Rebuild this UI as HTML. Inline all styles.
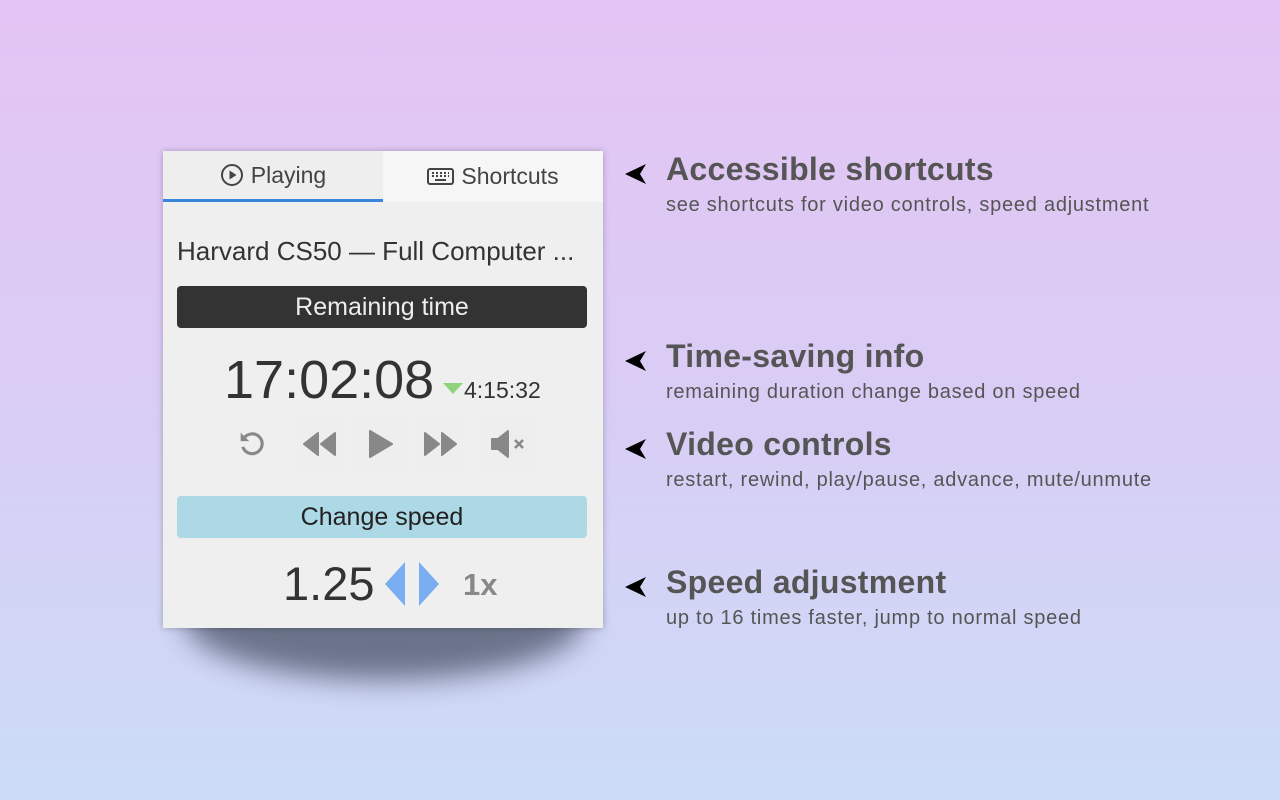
<!DOCTYPE html>
<html><head><meta charset="utf-8"><style>
*{margin:0;padding:0;box-sizing:border-box}
body{width:1280px;height:800px;overflow:hidden;background:linear-gradient(180deg,#e4c4f4 0%,#d9cdf5 50%,#cbdcf7 100%);font-family:"Liberation Sans",sans-serif;position:relative}
.shadow{position:absolute;left:185px;top:560px;width:400px;height:120px;border-radius:50%;background:#5a6278;filter:blur(14px);opacity:.85}
.panel{position:absolute;left:163px;top:151px;width:440px;height:477px;background:#efefef;box-shadow:0 0 6px rgba(0,0,0,.25);color:#333}
.tabs{height:51px;display:flex}
.tab{flex:1;display:flex;align-items:center;justify-content:center;font-size:23px;color:#444;gap:7px}
.t1{background:#eeeeee;border-bottom:3px solid #3b86dd}
.t2{background:#f6f6f6}
.title{position:absolute;left:14px;top:85px;font-size:26px;color:#333;white-space:nowrap}
.bar{position:absolute;left:14px;width:410px;height:42px;border-radius:4px;display:flex;align-items:center;justify-content:center;font-size:25px}
.rem{top:135px;background:#333;color:#eee}
.spd{top:345px;background:#add8e6;color:#222}
.timer{position:absolute;left:61px;top:198px;font-size:54px;color:#333;white-space:nowrap}
.small{position:absolute;left:301px;top:226px;font-size:23px;color:#333}
.tri{position:absolute;left:280px;top:232px;width:0;height:0;border-left:10px solid transparent;border-right:10px solid transparent;border-top:11px solid #8fd47d}
.ic{position:absolute;top:265px;width:56px;height:56px;display:flex;align-items:center;justify-content:center;margin-left:-28px;background:#eeeeee}
.val{position:absolute;left:120px;top:405px;font-size:47px;color:#333}
.one{position:absolute;left:300px;top:416px;font-size:31px;font-weight:bold;color:#888}
.ann{position:absolute;left:666px;color:#555}
.ann h2{font-size:32px;font-weight:bold;letter-spacing:.3px}
.ann p{font-size:20px;margin-top:6px;letter-spacing:.75px}
.arr{position:absolute;left:624px;width:22px;height:22px}
</style></head><body>
<div class="shadow"></div>
<div class="panel">
 <div class="tabs">
  <div class="tab t1"><svg width="24" height="24" viewBox="0 0 24 24"><circle cx="12" cy="12" r="10" fill="none" stroke="#444" stroke-width="2"/><path d="M9.5 7.5v9l7-4.5z" fill="#444"/></svg>Playing</div>
  <div class="tab t2"><svg width="27" height="20" viewBox="0 0 27 20"><rect x="1" y="2" width="25" height="15" rx="2" fill="none" stroke="#444" stroke-width="2"/><path d="M5 6h2M9 6h2M13 6h2M17 6h2M21 6h1M5 9h2M9 9h2M13 9h2M17 9h2M21 9h1M8 13h11" stroke="#444" stroke-width="2"/></svg>Shortcuts</div>
 </div>
 <div class="title">Harvard CS50 — Full Computer ...</div>
 <div class="bar rem">Remaining time</div>
 <div class="timer">17:02:08</div>
 <div class="tri"></div>
 <div class="small">4:15:32</div>
 <div class="ic" style="left:89px;background:none"><svg width="34" height="34" viewBox="0 0 24 24"><path d="M6 8.5A7 7 0 1 1 5.5 14" fill="none" stroke="#888" stroke-width="2.2"/><path d="M4 4v6h6z" fill="#888"/></svg></div>
 <div class="ic" style="left:156px"><svg width="34" height="28" viewBox="0 0 34 28"><path d="M16 3L2 14l14 11zM33 3L19 14l14 11z" fill="#888" stroke="#888" stroke-linejoin="round" stroke-width="2"/></svg></div>
 <div class="ic" style="left:217px"><svg width="28" height="32" viewBox="0 0 28 32"><path d="M4 3v26l22-13z" fill="#888" stroke="#888" stroke-linejoin="round" stroke-width="2"/></svg></div>
 <div class="ic" style="left:278px"><svg width="34" height="28" viewBox="0 0 34 28"><path d="M1 3l14 11L1 25zM18 3l14 11-14 11z" fill="#888" stroke="#888" stroke-linejoin="round" stroke-width="2"/></svg></div>
 <div class="ic" style="left:347px"><svg width="40" height="32" viewBox="0 0 40 32"><path d="M2 11h6l10-8v26l-10-8H2z" fill="#888" stroke="#888" stroke-linejoin="round" stroke-width="2"/><path d="M25 12l8 8M33 12l-8 8" stroke="#888" stroke-width="2.5"/></svg></div>
 <div class="bar spd">Change speed</div>
 <div class="val">1.25</div>
 <svg style="position:absolute;left:220px;top:410px" width="60" height="46" viewBox="0 0 60 46"><path d="M22 1L2 23l20 22z" fill="#7aaef2"/><path d="M36 1l20 22-20 22z" fill="#7aaef2"/></svg>
 <div class="one">1x</div>
</div>
<svg class="arr" style="top:163px" viewBox="0 0 22 22"><path d="M1 11L22 1l-6 10 6 10z" fill="#000"/></svg>
<svg class="arr" style="top:350px" viewBox="0 0 22 22"><path d="M1 11L22 1l-6 10 6 10z" fill="#000"/></svg>
<svg class="arr" style="top:438px" viewBox="0 0 22 22"><path d="M1 11L22 1l-6 10 6 10z" fill="#000"/></svg>
<svg class="arr" style="top:576px" viewBox="0 0 22 22"><path d="M1 11L22 1l-6 10 6 10z" fill="#000"/></svg>
<div class="ann" style="top:151px"><h2>Accessible shortcuts</h2><p>see shortcuts for video controls, speed adjustment</p></div>
<div class="ann" style="top:338px"><h2>Time-saving info</h2><p>remaining duration change based on speed</p></div>
<div class="ann" style="top:426px"><h2>Video controls</h2><p>restart, rewind, play/pause, advance, mute/unmute</p></div>
<div class="ann" style="top:564px"><h2>Speed adjustment</h2><p>up to 16 times faster, jump to normal speed</p></div>
</body></html>
